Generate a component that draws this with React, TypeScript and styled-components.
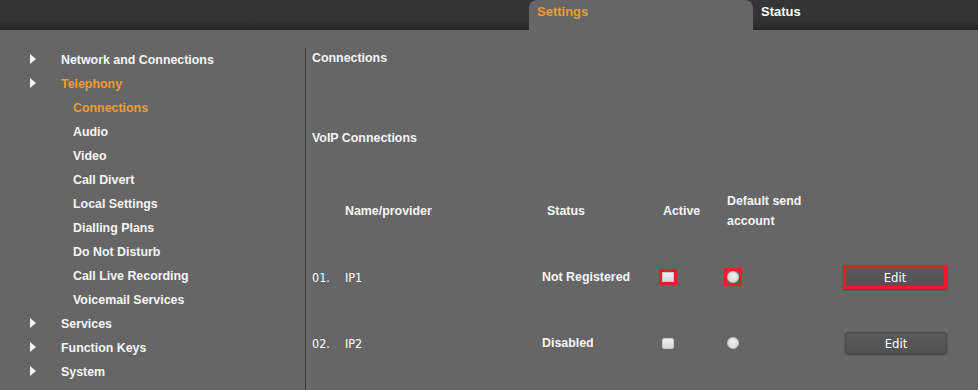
import { Fragment } from "react";
import styled, { createGlobalStyle } from "styled-components";

const GlobalStyle = createGlobalStyle`
  body {
    margin: 0;
    background: #666666;
    font-family: "Liberation Sans", Arial, sans-serif;
    font-size: 12.4px;
    font-weight: bold;
    color: #f6f6f6;
  }
`;

const ORANGE = "#f29b2e";
const RED = "#e61e28";

const Page = styled.div`
  width: 978px;
  height: 390px;
  overflow: hidden;
  display: flex;
  flex-direction: column;
`;

const TopBar = styled.div`
  height: 30px;
  display: flex;
  justify-content: flex-end;
  background: linear-gradient(#363636, #333333 70%, #262626);
`;

const Tab = styled.div<{ $active?: boolean }>`
  box-sizing: border-box;
  width: ${(p) => (p.$active ? "224px" : "225px")};
  height: 30px;
  padding-left: 8px;
  line-height: 24px;
  font-size: 13px;
  border-radius: 8px 8px 0 0;
  background: ${(p) => (p.$active ? "#666666" : "transparent")};
  color: ${(p) => (p.$active ? ORANGE : "#ffffff")};
`;

const Body = styled.div`
  flex: 1;
  display: flex;
  padding-top: 18px;
`;

const Sidebar = styled.div`
  width: 305px;
  border-right: 1px solid #3c3c3c;
  display: flex;
  flex-direction: column;
`;

const MenuRow = styled.div<{ $sub?: boolean; $selected?: boolean }>`
  height: 24px;
  display: flex;
  align-items: center;
  padding-left: ${(p) => (p.$sub ? "73px" : "30px")};
  color: ${(p) => (p.$selected ? ORANGE : "#f6f6f6")};
`;

const Arrow = styled.span`
  width: 0;
  height: 0;
  border-top: 5px solid transparent;
  border-bottom: 5px solid transparent;
  border-left: 6px solid #f4f4f4;
  margin-right: 25px;
  margin-top: -2px;
`;

const Content = styled.div`
  flex: 1;
  padding-left: 6px;
  display: flex;
  flex-direction: column;
`;

const Heading = styled.div<{ $gap?: number }>`
  line-height: 20px;
  margin-top: ${(p) => p.$gap ?? 0}px;
`;

const Table = styled.div`
  margin-top: 43px;
  display: grid;
  grid-template-columns: 33px 197px 119px 63px 121px 102px;
  grid-template-rows: 53px 66px 66px;
  align-items: center;
`;

const HeadCell = styled.div<{ $shift?: number }>`
  align-self: start;
  height: 40px;
  display: flex;
  align-items: center;
  line-height: 20px;
  padding-left: ${(p) => p.$shift ?? 0}px;
`;

const PlainCell = styled.div`
  font-family: "DejaVu Sans Condensed", "Liberation Sans", sans-serif;
  font-size: 12.5px;
  font-weight: normal;
  color: #ffffff;
`;

const Cell = styled.div<{ $shift?: number }>`
  margin-left: ${(p) => p.$shift ?? 0}px;
  display: flex;
  align-items: center;
`;

const FocusRing = styled.span<{ $on?: boolean }>`
  display: flex;
  border: 3px solid ${(p) => (p.$on ? RED : "transparent")};
`;

const Check = styled.span<{ $focus?: boolean }>`
  width: 12px;
  height: ${(p) => (p.$focus ? "10px" : "11px")};
  box-sizing: border-box;
  border: 1px solid #c8c8c8;
  border-radius: ${(p) => (p.$focus ? "0" : "2px")};
  background: linear-gradient(#f0f0f0, #d8d8d8);
`;

const Radio = styled.span`
  width: 12px;
  height: 12px;
  box-sizing: border-box;
  border-radius: 50%;
  border: 1px solid #c4c4c4;
  background: radial-gradient(circle at 50% 40%, #f2f2f2, #d2d2d2);
`;

const EditButton = styled.button<{ $focus?: boolean }>`
  box-sizing: border-box;
  width: ${(p) => (p.$focus ? "106px" : "102px")};
  height: ${(p) => (p.$focus ? "24px" : "22px")};
  margin-left: ${(p) => (p.$focus ? "-2px" : "0")};
  padding: 0;
  border: ${(p) => (p.$focus ? `3px solid ${RED}` : "1px solid #4a4a4a")};
  border-radius: ${(p) => (p.$focus ? "0" : "3px")};
  background: linear-gradient(#5a5a5a, #525252);
  box-shadow: 0 1px 2px rgba(0, 0, 0, 0.35);
  color: #ffffff;
  font-family: "DejaVu Sans Condensed", "Liberation Sans", sans-serif;
  font-size: 13px;
  font-weight: normal;
`;

const menu = [
  { label: "Network and Connections", arrow: true },
  { label: "Telephony", arrow: true, selected: true },
  { label: "Connections", sub: true, selected: true },
  { label: "Audio", sub: true },
  { label: "Video", sub: true },
  { label: "Call Divert", sub: true },
  { label: "Local Settings", sub: true },
  { label: "Dialling Plans", sub: true },
  { label: "Do Not Disturb", sub: true },
  { label: "Call Live Recording", sub: true },
  { label: "Voicemail Services", sub: true },
  { label: "Services", arrow: true },
  { label: "Function Keys", arrow: true },
  { label: "System", arrow: true },
];

const connections = [
  { no: "01.", name: "IP1", status: "Not Registered", focus: true },
  { no: "02.", name: "IP2", status: "Disabled", focus: false },
];

const App = () => {
  return (
    <Page>
      <GlobalStyle />
      <TopBar>
        <Tab $active>Settings</Tab>
        <Tab>Status</Tab>
      </TopBar>
      <Body>
        <Sidebar>
          {menu.map((m) => (
            <MenuRow key={m.label} $sub={m.sub} $selected={m.selected}>
              {m.arrow && <Arrow />}
              {m.label}
            </MenuRow>
          ))}
        </Sidebar>
        <Content>
          <Heading>Connections</Heading>
          <Heading $gap={60}>VoIP Connections</Heading>
          <Table>
            <div />
            <HeadCell>Name/provider</HeadCell>
            <HeadCell $shift={5}>Status</HeadCell>
            <HeadCell $shift={2}>Active</HeadCell>
            <HeadCell $shift={3}>
              Default send
              <br />
              account
            </HeadCell>
            <div />
            {connections.map((c) => (
              <Fragment key={c.no}>
                <PlainCell>{c.no}</PlainCell>
                <PlainCell>{c.name}</PlainCell>
                <Cell>{c.status}</Cell>
                <Cell $shift={-2}>
                  <FocusRing $on={c.focus}>
                    <Check $focus={c.focus} />
                  </FocusRing>
                </Cell>
                <Cell>
                  <FocusRing $on={c.focus}>
                    <Radio />
                  </FocusRing>
                </Cell>
                <Cell>
                  <EditButton $focus={c.focus}>Edit</EditButton>
                </Cell>
              </Fragment>
            ))}
          </Table>
        </Content>
      </Body>
    </Page>
  );
};

export default App;
